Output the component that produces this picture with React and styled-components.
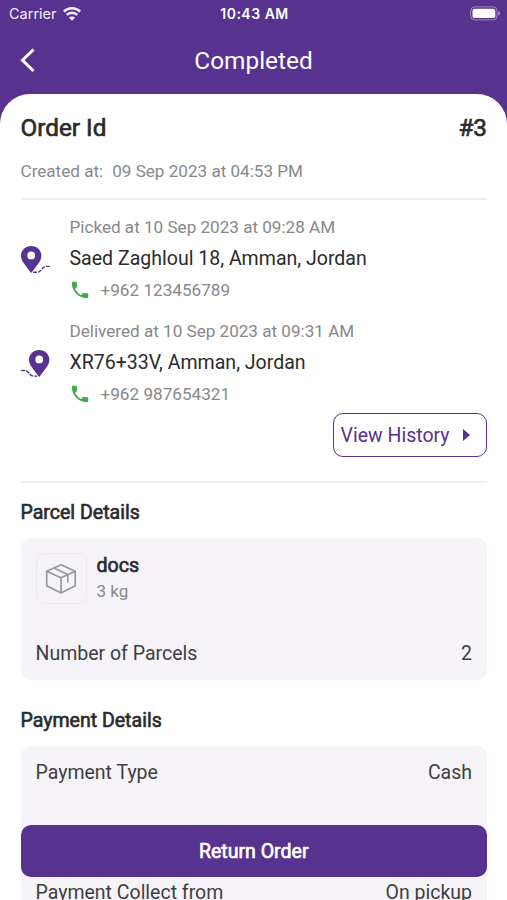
import React from "react";
import styled, { createGlobalStyle, css } from "styled-components";
import { MdPhone } from "react-icons/md";

const colors = {
  primary: "#57328f",
  text: "#2b2b2d",
  rowText: "#3e3e42",
  muted: "#88888a",
  panel: "#f6f4f9",
  line: "#efeff1",
  green: "#43a94c",
};

const stops = [
  {
    time: "Picked at 10 Sep 2023 at 09:28 AM",
    address: "Saed Zaghloul 18, Amman, Jordan",
    phone: "+962 123456789",
  },
  {
    time: "Delivered at 10 Sep 2023 at 09:31 AM",
    address: "XR76+33V, Amman, Jordan",
    phone: "+962 987654321",
    delivered: true,
  },
];

const payments = [
  { label: "Payment Type", value: "Cash", gap: "0" },
  { label: "Payment Status", value: "Paid", gap: "33px" },
  { label: "Payment Collect from", value: "On pickup", gap: "31px" },
];

function WifiIcon() {
  return (
    <svg width="18" height="14" viewBox="0 0 18 14" fill="none" stroke="white" strokeWidth="2.5">
      <path d="M0.9 4.6a11.5 11.5 0 0 1 16.2 0" />
      <path d="M3.7 7.9a7.4 7.4 0 0 1 10.6 0" />
      <path d="M9 13.8 5.9 10.7a4.4 4.4 0 0 1 6.2 0z" fill="white" stroke="none" />
    </svg>
  );
}

function BatteryIcon() {
  return (
    <svg width="31" height="15" viewBox="0 0 31 15">
      <rect x="0.7" y="0.9" width="26.4" height="13" rx="4" fill="none" stroke="white" strokeOpacity="0.42" />
      <rect x="2.5" y="2.7" width="22.8" height="9.4" rx="2.2" fill="white" />
      <path d="M28.4 5.2c2.2.6 2.2 3.8 0 4.4z" fill="white" fillOpacity="0.45" />
    </svg>
  );
}

function PinIcon({ delivered }) {
  return (
    <svg width="30" height="30" viewBox="0 0 30 30">
      <path
        transform={delivered ? "translate(8 0)" : undefined}
        d="M10.2 .9C4.7.9 0 5 0 10.6c0 5.8 5 10.4 10.2 17.4 5.2-7 10.2-11.6 10.2-17.4C20.4 5 15.7.9 10.2.9Zm0 5.6a3.9 3.9 0 1 1 0 7.8 3.9 3.9 0 0 1 0-7.8Z"
        fill={colors.primary}
        fillRule="evenodd"
      />
      <path
        d={
          delivered
            ? "M.2 21.5h3.4c3.5.3 3.8 3.1 7 5.1 1.5.7 3.6.6 5.7.5"
            : "M12 27.2c2.5.2 4.7.2 6.3-.6 3.2-2 3.3-5 6.8-5.2h3.6"
        }
        fill="none"
        stroke={colors.primary}
        strokeWidth="1.4"
        strokeDasharray="4 1"
      />
    </svg>
  );
}

function BoxIcon() {
  return (
    <svg width="32" height="32" viewBox="0 0 32 32" fill="none" stroke="#98989b" strokeWidth="1.7" strokeLinejoin="round">
      <path d="M16 1.8 30.2 8.2v14.6L16 30 1.7 22.8V8.2zM1.7 8.2 16 14.8l14.2-6.6M16 14.8V30M8.8 5 22.8 11.6v8" />
    </svg>
  );
}

export default function App() {
  return (
    <>
      <GlobalStyle />
      <Screen>
        <StatusBar>
          <Carrier>
            Carrier
            <WifiIcon />
          </Carrier>
          <Clock>10:43 AM</Clock>
          <BatteryIcon />
        </StatusBar>
        <Header>
          <BackButton aria-label="Back">
            <svg width="16" height="26" viewBox="0 0 16 26" fill="none" stroke="white" strokeWidth="3">
              <path d="M13.5 1.5 2.5 12.2l11 10.8" />
            </svg>
          </BackButton>
          <Title>Completed</Title>
        </Header>

        <Sheet>
          <OrderRow>
            <span>Order Id</span>
            <span>#3</span>
          </OrderRow>
          <Created>
            <span>Created at:</span>
            <span>09 Sep 2023 at 04:53 PM</span>
          </Created>
          <Divider />

          <Stops>
            {stops.map((stop) => (
              <Stop key={stop.phone}>
                <PinIcon delivered={stop.delivered} />
                <div>
                  <StopTime>{stop.time}</StopTime>
                  <Address>{stop.address}</Address>
                  <Phone>
                    <MdPhone size={22} color={colors.green} />
                    {stop.phone}
                  </Phone>
                </div>
              </Stop>
            ))}
          </Stops>
          <HistoryButton>
            View History
            <Caret />
          </HistoryButton>
          <Divider />

          <SectionTitle>Parcel Details</SectionTitle>
          <Panel>
            <Parcel>
              <Thumb>
                <BoxIcon />
              </Thumb>
              <div>
                <ParcelName>docs</ParcelName>
                <Weight>3 kg</Weight>
              </div>
            </Parcel>
            <Row $gap="36px">
              <span>Number of Parcels</span>
              <span>2</span>
            </Row>
          </Panel>

          <PaymentTitle>Payment Details</PaymentTitle>
          <Panel $top="13px">
            {payments.map((item) => (
              <Row key={item.label} $gap={item.gap}>
                <span>{item.label}</span>
                <span>{item.value}</span>
              </Row>
            ))}
          </Panel>
        </Sheet>
        <ReturnButton>Return Order</ReturnButton>
      </Screen>
    </>
  );
}

const GlobalStyle = createGlobalStyle`
  * {
    box-sizing: border-box;
  }

  body {
    margin: 0;
    overflow: hidden;
  }

  svg {
    display: block;
    flex-shrink: 0;
  }

  button {
    padding: 0;
    border: none;
    background: none;
    font: inherit;
  }
`;

/* regular weight thickened a little, narrower than real bold */
const thick = css`
  -webkit-text-stroke: 0.65px currentColor;
`;

const Screen = styled.div`
  position: relative;
  height: 900px;
  overflow: hidden;
  background: ${colors.primary};
  color: ${colors.text};
  font-family: Roboto, "Liberation Sans", sans-serif;
`;

const StatusBar = styled.div`
  display: grid;
  grid-template-columns: 1fr auto 1fr;
  align-items: center;
  height: 27px;
  padding: 0 6px 0 9px;
  color: white;
  font-family: Inter, "Liberation Sans", sans-serif;
  font-size: 14.5px;

  > svg {
    justify-self: end;
  }
`;

const Carrier = styled.div`
  display: flex;
  align-items: center;
  gap: 6px;
  opacity: 0.92;
`;

const Clock = styled.div`
  margin-right: 1px;
  font-weight: 600;
  font-size: 14px;
  letter-spacing: 0.5px;
`;

const Header = styled.div`
  display: grid;
  grid-template-columns: 1fr auto 1fr;
  align-items: center;
  height: 67px;
  padding: 0 20px;
  color: white;
`;

const BackButton = styled.button`
  justify-self: start;
`;

const Title = styled.div`
  font-size: 24.4px;
`;

const Sheet = styled.div`
  display: flex;
  flex-direction: column;
  height: 806px;
  padding: 20px 20px 0 20.5px;
  overflow: hidden;
  border-radius: 30px 30px 0 0;
  background: white;
`;

const OrderRow = styled.div`
  ${thick}
  display: flex;
  flex-shrink: 0;
  justify-content: space-between;
  height: 30px;
  font-size: 24.3px;
  line-height: 28px;
`;

const Created = styled.div`
  display: flex;
  flex-shrink: 0;
  gap: 9px;
  height: 24px;
  margin: 15px 0 14.5px;
  color: ${colors.muted};
  font-size: 17.1px;
  line-height: 24px;
`;

const Divider = styled.div`
  flex-shrink: 0;
  height: 2px;
  background: ${colors.line};
`;

const Stops = styled.div`
  flex-shrink: 0;
  padding-top: 14.5px;
`;

const Stop = styled.div`
  display: flex;
  align-items: center;
  gap: 19px;
  height: 104px;

  > svg {
    margin-top: -12px;
  }
`;

const StopTime = styled.div`
  height: 26px;
  color: ${colors.muted};
  font-size: 17.1px;
  line-height: 26px;
`;

const Address = styled.div`
  height: 36px;
  font-size: 19.55px;
  line-height: 38px;
`;

const Phone = styled.div`
  display: flex;
  align-items: center;
  gap: 10px;
  height: 28px;
  margin: 0 0 14px -1px;
  color: ${colors.muted};
  font-size: 17.15px;
`;

const HistoryButton = styled.button`
  display: flex;
  flex-shrink: 0;
  align-items: center;
  align-self: flex-end;
  justify-content: space-between;
  width: 154px;
  height: 44px;
  margin: -9px 0 24px;
  padding: 0 16px 0 6.5px;
  border: 1.5px solid ${colors.primary};
  border-radius: 10px;
  color: ${colors.primary};
  font-size: 19.5px;
`;

const Caret = styled.span`
  border-top: 6px solid transparent;
  border-bottom: 6px solid transparent;
  border-left: 7px solid ${colors.primary};
`;

const SectionTitle = styled.div`
  ${thick}
  flex-shrink: 0;
  height: 26px;
  margin: 17px 0 12px;
  font-size: 19.55px;
  line-height: 26px;
`;

const PaymentTitle = styled(SectionTitle)`
  margin: 28px 0 12px;
`;

const Panel = styled.div`
  flex-shrink: 0;
  padding: ${(props) => props.$top || "15px"} 15px 12px;
  border-radius: 10px;
  background: ${colors.panel};
`;

const Parcel = styled.div`
  display: flex;
  gap: 10px;
`;

const Thumb = styled.div`
  display: flex;
  align-items: center;
  justify-content: center;
  width: 51px;
  height: 51px;
  border: 1px solid #ebebee;
  border-radius: 9px;
`;

const ParcelName = styled.div`
  ${thick}
  height: 25px;
  font-size: 19.6px;
  line-height: 25px;
`;

const Weight = styled.div`
  height: 26px;
  color: ${colors.muted};
  font-size: 17px;
  line-height: 26px;
`;

const Row = styled.div`
  display: flex;
  justify-content: space-between;
  height: 28px;
  margin-top: ${(props) => props.$gap};
  color: ${colors.rowText};
  font-size: 19.5px;
  line-height: 28px;
`;

const ReturnButton = styled.button`
  ${thick}
  position: absolute;
  right: 20px;
  bottom: 23px;
  left: 20.5px;
  height: 52px;
  border-radius: 10px;
  background: ${colors.primary};
  color: white;
  font-size: 19.5px;
`;
